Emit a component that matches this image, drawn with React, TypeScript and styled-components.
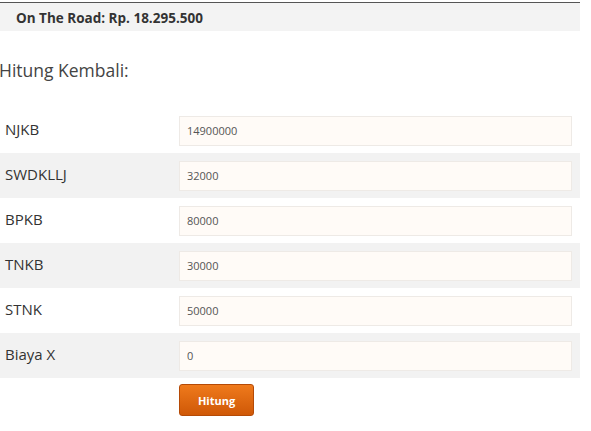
import styled, { createGlobalStyle } from 'styled-components';

const GlobalStyle = createGlobalStyle`
  body {
    margin: 0;
    background: #fff;
    font-family: 'Open Sans', 'DejaVu Sans', sans-serif;
    color: #333;
  }
`;

const fields = [
  { label: 'NJKB', value: '14900000' },
  { label: 'SWDKLLJ', value: '32000' },
  { label: 'BPKB', value: '80000' },
  { label: 'TNKB', value: '30000' },
  { label: 'STNK', value: '50000' },
  { label: 'Biaya X', value: '0' },
];

const App = () => {
  return (
    <>
      <GlobalStyle />
      <Page>
        <TotalBar>On The Road: Rp. 18.295.500</TotalBar>
        <Title>Hitung Kembali:</Title>
        <FormTable>
          {fields.map((f, i) => (
            <Row key={f.label} striped={i % 2 === 1}>
              <Label>{f.label}</Label>
              <Field>
                <Input defaultValue={f.value} />
              </Field>
            </Row>
          ))}
          <ButtonRow>
            <Button type="button">Hitung</Button>
          </ButtonRow>
        </FormTable>
      </Page>
    </>
  );
};
export default App;

const Page = styled.div`
  width: 580px;
  padding-top: 2px;
`;

const TotalBar = styled.div`
  height: 28px;
  line-height: 30px;
  border-top: 1px solid #555;
  background: #f3f3f3;
  padding-left: 16px;
  font-size: 13.5px;
  font-weight: 700;
  color: #333;
`;

const Title = styled.h3`
  margin: 26px 0 0 0;
  font-size: 17.5px;
  font-weight: 400;
  color: #444;
  line-height: 26px;
  text-indent: -1px;
`;

const FormTable = styled.div`
  margin-top: 25px;
  display: flex;
  flex-direction: column;
`;

const Row = styled.div<{ striped: boolean }>`
  display: grid;
  grid-template-columns: 179px 393px;
  align-items: center;
  height: 45px;
  background: ${(p) => (p.striped ? '#f2f2f2' : '#fff')};
`;

const Label = styled.div`
  padding-left: 5px;
  padding-bottom: 3px;
  font-size: 15px;
  color: #333;
`;

const Field = styled.div`
  display: flex;
`;

const Input = styled.input`
  box-sizing: border-box;
  width: 393px;
  height: 30px;
  border: 1px solid #eeeae6;
  background: #fffbf7;
  padding: 0 7px;
  font-family: 'Open Sans', 'DejaVu Sans', sans-serif;
  font-size: 11px;
  color: #555;
  outline: none;
`;

const ButtonRow = styled.div`
  padding: 6px 0 0 179px;
`;

const Button = styled.button`
  width: 75px;
  height: 32px;
  border: 1px solid #b54a06;
  border-radius: 3px;
  background: linear-gradient(#ef7a1c, #cf5807);
  color: #fff;
  font-family: 'Open Sans', 'DejaVu Sans', sans-serif;
  font-size: 11px;
  font-weight: 700;
  cursor: pointer;
`;
